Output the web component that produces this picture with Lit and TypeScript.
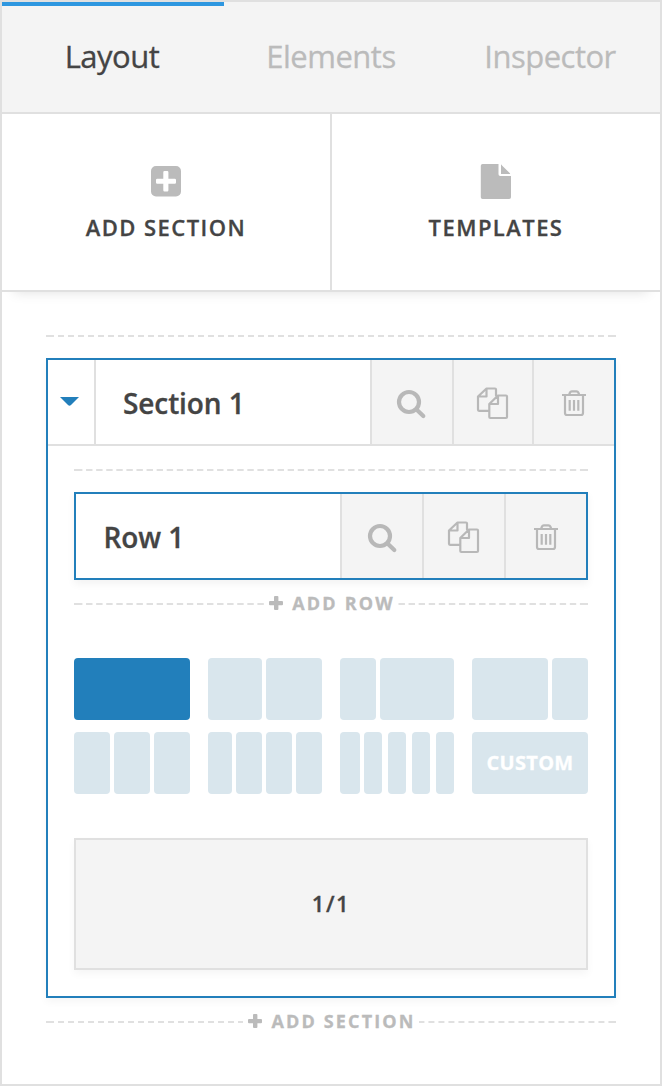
import { LitElement, html, css, svg } from "lit";
import { customElement, property, state } from "lit/decorators.js";
import { classMap } from "lit/directives/class-map.js";

const plusIcon = svg`<path d="M6 0h2.400a1 1 0 0 1 1 1v3.900h3.600a1 1 0 0 1 1 1v2.400a1 1 0 0 1-1 1H9.400V13a1 1 0 0 1-1 1H6a1 1 0 0 1-1-1V9.300H1a1 1 0 0 1-1-1V5.900a1 1 0 0 1 1-1h4V1a1 1 0 0 1 1-1z"/>`;

/** Dashed divider, optionally carrying an "add" label in the middle. */
@customElement("dash-rule")
class DashRule extends LitElement {
  @property() label = "";
  static styles = css`
    :host { display: flex; align-items: center; height: 2px; }
    .line {
      flex: 1; height: 2px; box-sizing: border-box;
      background-image: linear-gradient(90deg, #e0e0e0 6px, transparent 6px);
      background-size: var(--dash-period, 10px) 2px;
    }
    .start { border-left: 2px solid #e0e0e0; }
    .end { border-right: 2px solid #e0e0e0; }
    .mirrored {
      background-image: linear-gradient(270deg, #e0e0e0 6px, transparent 6px);
      background-position: right top;
    }
    .label {
      display: flex; align-items: center; gap: 9px;
      padding: 0 2px 2px 6px; margin-left: -1px; color: #bbb;
      font: 700 18px/24px "Open Sans", sans-serif;
      letter-spacing: 2.15px; white-space: nowrap;
    }
    .label span { margin-right: 1px; }
    .plus { display: block; width: 14px; height: 14px; fill: #bbb; }
  `;
  render() {
    return this.label
      ? html`<div class="line start"></div>
          <div class="label"><svg class="plus" viewBox="0 0 14 14">${plusIcon}</svg><span>${this.label}</span></div>
          <div class="line end mirrored"></div>`
      : html`<div class="line start end"></div>`;
  }
}

/** Title bar tools: inspect, duplicate, delete. */
@customElement("item-tools")
class ItemTools extends LitElement {
  static styles = css`
    :host { display: grid; grid-template-columns: var(--tool-columns); background: #f4f4f4; }
    .tool { display: flex; align-items: center; justify-content: center; border-left: 2px solid #e0e0e0; }
    svg { display: block; width: 32px; height: 32px; overflow: visible; fill: none; stroke: #b8b8b8; stroke-width: 2.2; stroke-linejoin: round; stroke-linecap: round; }
    .search { stroke-width: 4.2; margin-left: var(--search-shift, 0px); }
    .trash { margin-right: var(--trash-shift, 0px); }
  `;
  render() {
    return html`
      <div class="tool"><svg class="search" viewBox="0 0 32 32"><circle cx="13" cy="16" r="10"/><path d="M20.500 23.500L27.300 30"/></svg></div>
      <div class="tool"><svg viewBox="0 0 32 32"><path d="M12.300 24.800H2a1 1 0 0 1-1-1V10.500L9.500 2.500H18a1 1 0 0 1 1 1V9.500M9.500 2.500V10.500H1M12.300 18L21 9.500H29a1 1 0 0 1 1 1V31a1 1 0 0 1-1 1H13.300a1 1 0 0 1-1-1ZM21 9.500V18H12.300"/></svg></div>
      <div class="tool"><svg class="trash" viewBox="0 0 32 32"><path stroke-linecap="butt" d="M4 9H28M7 9V27a2 2 0 0 0 2 2H23a2 2 0 0 0 2-2V9M11 9L12 6.500a2 2 0 0 1 1.800-1.200H18.500a2 2 0 0 1 1.800 1.200L21.300 9M11.700 14V24.700M16 14V24.700M20.300 14V24.700"/></svg></div>`;
  }
}

type Cell = [width: number, gapBefore: number];
const LAYOUTS: { cells: Cell[]; label?: string }[] = [
  { cells: [[116, 0]] },
  { cells: [[54, 0], [56, 4]] },
  { cells: [[36, 0], [74, 4]] },
  { cells: [[76, 0], [36, 4]] },
  { cells: [[36, 0], [36, 4], [36, 4]] },
  { cells: [[24, 0], [26, 4], [26, 4], [26, 4]] },
  { cells: [[20, 0], [18, 4], [18, 6], [18, 6], [18, 6]] },
  { cells: [[116, 0]], label: "CUSTOM" },
];

@customElement("layout-picker")
class LayoutPicker extends LitElement {
  @state() selected = 0;
  static styles = css`
    :host { display: grid; grid-template-columns: 116px 114px 114px 116px; column-gap: 18px; row-gap: 12px; }
    .option { display: flex; height: 62px; cursor: pointer; }
    .cell {
      display: flex; align-items: center; justify-content: center; border-radius: 4px; background: #d9e6ed; color: #fff;
      font: 700 20px/28px "Open Sans", sans-serif; letter-spacing: 0.3px;
    }
    .active .cell { background: #227fbb; }
  `;
  render() {
    return LAYOUTS.map((layout, i) => html`
      <div class=${classMap({ option: true, active: i === this.selected })} @click=${() => (this.selected = i)}>
        ${layout.cells.map(([w, gap]) => html`<div class="cell" style="width:${w}px;margin-left:${gap}px">${layout.label ?? ""}</div>`)}
      </div>`);
  }
}

@customElement("app-root")
class AppRoot extends LitElement {
  static styles = css`
    :host {
      display: block; box-sizing: border-box; height: 1086px; border: 2px solid #e0e0e0;
      background: #fff; color: #444; font-family: "Open Sans", sans-serif;
      -webkit-text-stroke: 0.3px currentColor;
    }
    .tabs {
      display: grid; grid-template-columns: 222px 214px 222px; height: 110px;
      background: #f4f4f4; border-bottom: 2px solid #e0e0e0;
    }
    .tab {
      box-sizing: border-box; padding-top: 28px; border-top: 4px solid transparent; text-align: center;
      font-size: 31px; line-height: 44px; letter-spacing: -0.5px; color: #bbb;
    }
    .tab.current { border-color: #2e97e0; color: #444; padding-right: 2px; }
    .tab:last-child { padding-left: 2px; }
    .actions {
      display: grid; grid-template-columns: 330px 328px; height: 176px; border-bottom: 2px solid #e0e0e0;
      box-shadow: 0 12px 12px -12px rgba(0, 0, 0, 0.13);
    }
    .action { box-sizing: border-box; display: flex; flex-direction: column; align-items: center; padding-top: 48px; }
    .action:first-child { border-right: 2px solid #e0e0e0; }
    .action svg { display: block; width: 32px; height: 38px; fill: #bbb; }
    .action span { margin-top: 12px; font-size: 22px; line-height: 30px; font-weight: 600; letter-spacing: 1.45px; }
    .canvas { padding: 43px 44px 0; }
    .section {
      margin-top: 21px; box-sizing: border-box; height: 640px; border: 2px solid #227fbb;
      box-shadow: 0 4px 8px rgba(0, 0, 0, 0.04);
    }
    .bar { display: flex; height: 84px; }
    .section > .bar { border-bottom: 2px solid #e0e0e0; }
    .toggle { box-sizing: border-box; width: 48px; border-right: 2px solid #e0e0e0; padding: 37px 0 0 12px; }
    .toggle svg { display: block; width: 19px; height: 9px; fill: #227fbb; }
    .name { flex: 1; padding: 23px 0 0 27px; font-size: 28px; line-height: 40px; font-weight: 600; letter-spacing: -0.1px; }
    .section > .bar item-tools { --tool-columns: 82px 80px 82px; }
    .body { padding: 23px 26px 0; --dash-period: 10.08px; }
    .row { margin: 21px 0 23px; border: 2px solid #227fbb; box-shadow: 0 4px 8px rgba(0, 0, 0, 0.05); --search-shift: 2px; --trash-shift: 1px; }
    .row item-tools { --tool-columns: 82px 82px 82px; }
    .row .name { padding-left: 27.5px; }
    layout-picker { margin-top: 53px; }
    .column {
      margin-top: 44px; box-sizing: border-box; height: 132px; border: 2px solid #e0e0e0; background: #f4f4f4;
      display: flex; align-items: center; justify-content: center; padding-bottom: 2px;
      font-size: 22px; font-weight: 600; letter-spacing: 1.6px;
      box-shadow: 0 4px 8px rgba(0, 0, 0, 0.04);
    }
    .canvas > dash-rule:last-child { margin-top: 23px; }
  `;
  render() {
    return html`
      <nav class="tabs">
        <div class="tab current">Layout</div>
        <div class="tab">Elements</div>
        <div class="tab">Inspector</div>
      </nav>
      <div class="actions">
        <div class="action">
          <svg viewBox="0 0 32 38"><path fill-rule="evenodd" d="M6 4H26a5 5 0 0 1 5 5V29.500a5 5 0 0 1-5 5H6a5 5 0 0 1-5-5V9a5 5 0 0 1 5-5zM14.500 9a1.200 1.200 0 0 0-1.200 1.200V16.700H7.200A1.200 1.200 0 0 0 6 17.900v2.700a1.200 1.200 0 0 0 1.200 1.200H13.300V28.300a1.200 1.200 0 0 0 1.200 1.200h2.700a1.200 1.200 0 0 0 1.200-1.200V21.800h6.400a1.200 1.200 0 0 0 1.200-1.200V17.900a1.200 1.200 0 0 0-1.200-1.200H18.400V10.200A1.200 1.200 0 0 0 17.200 9z"/></svg>
          <span>ADD SECTION</span>
        </div>
        <div class="action">
          <svg viewBox="0 0 32 38"><path d="M2.600 2H18.500V12.200a1.800 1.800 0 0 0 1.800 1.800H31V35.200a1.800 1.800 0 0 1-1.800 1.800H2.600a1.800 1.800 0 0 1-1.800-1.800V3.800A1.800 1.800 0 0 1 2.600 2zM21 2.600a3 3 0 0 1 1 .8L29.400 10.800a3 3 0 0 1 .8 1.200H21z"/></svg>
          <span>TEMPLATES</span>
        </div>
      </div>
      <main class="canvas">
        <dash-rule></dash-rule>
        <section class="section">
          <div class="bar">
            <div class="toggle"><svg viewBox="0 0 19 9"><path d="M0 0H19L11 8q-1.500 1.500-3 0z"/></svg></div>
            <div class="name">Section 1</div>
            <item-tools></item-tools>
          </div>
          <div class="body">
            <dash-rule></dash-rule>
            <div class="row bar">
              <div class="name">Row 1</div>
              <item-tools></item-tools>
            </div>
            <dash-rule label="ADD ROW"></dash-rule>
            <layout-picker></layout-picker>
            <div class="column">1/1</div>
          </div>
        </section>
        <dash-rule label="ADD SECTION"></dash-rule>
      </main>`;
  }
}
